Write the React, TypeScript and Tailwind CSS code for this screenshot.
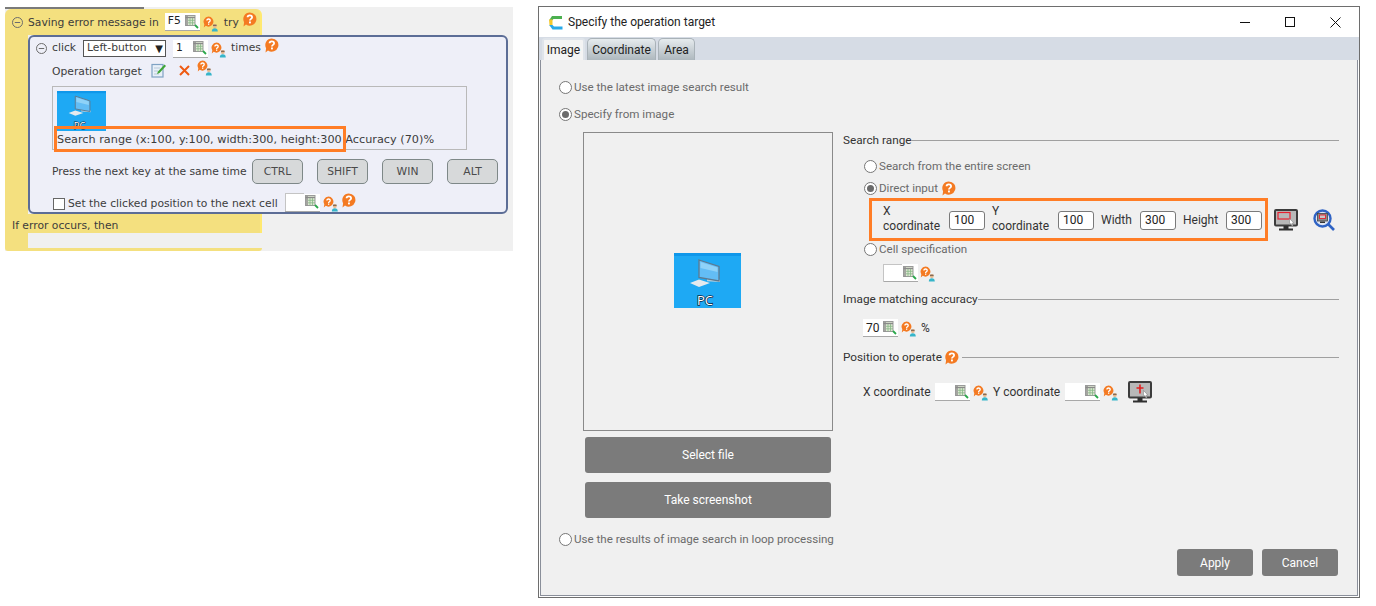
const HelpIcon = () => (
  <svg width="15" height="15" viewBox="0 0 15 15" className="shrink-0">
    <path d="M7.8.4a6.600 6.600 0 1 1-3.800 12L1.500 14.500l.6-4.300A6.600 6.600 0 0 1 7.800.4z" fill="#f47a22" />
    <path d="M5.600 5.300c0-2.600 4.500-2.600 4.500 0 0 1.600-2.200 1.600-2.200 3.300" fill="none" stroke="#fff" strokeWidth="1.800" />
    <rect x="7" y="9.500" width="1.900" height="1.900" fill="#fff" />
  </svg>
)

const HelpUserIcon = () => (
  <svg width="16" height="16" viewBox="0 0 16 16" className="shrink-0">
    <path d="M5.500 .6a5 5 0 1 1-2.800 9.200L.8 11.400l.5-3.200A5 5 0 0 1 5.500 .6z" fill="#f47a22" />
    <path d="M3.900 4.500c0-2 3.300-2 3.300 0 0 1.200-1.600 1.200-1.600 2.400" fill="none" stroke="#fff" strokeWidth="1.300" />
    <rect x="5" y="7.500" width="1.300" height="1.300" fill="#fff" />
    <circle cx="11.800" cy="10" r="2" fill="#e3b68c" />
    <path d="M10 8.800h3.600v.8H10z" fill="#4a3a30" />
    <path d="M8.800 15.500c0-2.500 1.200-3.300 3-3.300s3 .8 3 3.300z" fill="#37b5c9" />
  </svg>
)

const GridIcon = () => (
  <svg width="14" height="14" viewBox="0 0 14 14" className="shrink-0">
    <rect x="0.500" y="0.500" width="9.500" height="10" fill="#dfe8d4" stroke="#9a9a9a" />
    <path d="M0.500 2.500h9.500" stroke="#8a8a8a" strokeWidth="1.400" />
    <path d="M2 1v9.500" stroke="#8a8a8a" strokeWidth="1.400" />
    <path d="M5 3v7.500M7.500 3v7.500M3 5.300h7M3 7.800h7" stroke="#86b886" strokeWidth="0.800" />
    <path d="M10 10l3 3" stroke="#2aa84a" strokeWidth="1.800" />
  </svg>
)

const CellInput = ({ value = '', boxed = false }: { value?: string; boxed?: boolean }) => (
  <div className="flex h-[18px] w-[35px] shrink-0 items-center justify-between border-b border-[#a8a8a8] bg-white text-[#222]">
    {boxed ? (
      <div className="h-[18px] w-[19px] border-l border-t border-[#c4c4c4]" />
    ) : (
      <span className="pl-[3px] leading-none">{value}</span>
    )}
    <div className="pr-[1px]">
      <GridIcon />
    </div>
  </div>
)

const PcThumb = ({ className }: { className: string }) => (
  <svg viewBox="0 0 67 55" preserveAspectRatio="xMidYMin slice" className={className}>
    <rect width="67" height="55" fill="#1ea9f4" />
    <rect width="67" height="3" fill="#0f97ea" />
    <path d="M33 25.500l13 1.200v2.300l-13-.8z" fill="#b9d0de" />
    <path d="M25 7l20 6.500V28l-20-3.500z" fill="#63bdf5" stroke="#5d7a90" strokeWidth="1.300" />
    <path d="M26.500 9l17 5.500V19L26.500 15z" fill="#8fd2f8" />
    <path d="M16 30l9-3.500 11 3.500-11 4z" fill="#e4eaee" />
    <text x="31" y="52" textAnchor="middle" fontSize="13" fontFamily="Open Sans, sans-serif" fill="#fff" stroke="#0b2a44" strokeWidth="1.500" paintOrder="stroke">PC</text>
  </svg>
)

const MonitorIcon = ({ cross = false }: { cross?: boolean }) => (
  <svg width="24" height="23" viewBox="0 0 24 23" className="shrink-0">
    <rect x="1" y="1" width="22" height="15.500" rx="1" fill="#b8b8b8" stroke="#3c3c3c" strokeWidth="2" />
    <path d="M9.500 17h5v2.500h-5zM5 19.500h14v2H5z" fill="#2f2f2f" />
    {cross ? (
      <path d="M12 3.500v9M8.500 7h7" stroke="#e02020" strokeWidth="1.600" />
    ) : (
      <rect x="4" y="3.500" width="12" height="6.500" fill="#b8b8b8" stroke="#e8202f" strokeWidth="1.200" />
    )}
    <path d="M15.500 9.500v6l1.500-1 1 2.500 1-.5-1-2.300h2z" fill="#fff" stroke="#777" strokeWidth="0.500" />
  </svg>
)

const SearchMonitorIcon = () => (
  <svg width="23" height="22" viewBox="0 0 23 22" className="shrink-0">
    <circle cx="9.500" cy="9.500" r="8" fill="#dfe6f2" stroke="#2f63c4" strokeWidth="2.400" />
    <rect x="4.500" y="4.500" width="10" height="7.500" fill="#8c8c8c" stroke="#444" strokeWidth="0.800" />
    <rect x="6.500" y="6" width="6" height="3.500" fill="#c8c8c8" stroke="#e8202f" strokeWidth="0.900" />
    <path d="M7 12.500h5v1.500H7z" fill="#333" />
    <path d="M15 15l6 6" stroke="#2f63c4" strokeWidth="2.600" />
  </svg>
)

const Collapse = () => (
  <svg width="11" height="11" viewBox="0 0 11 11" className="shrink-0">
    <circle cx="5.500" cy="5.500" r="5" fill="none" stroke="#6c6c6c" />
    <path d="M2.800 5.500h5.400" stroke="#6c6c6c" />
  </svg>
)

const Radio = ({ checked = false, label }: { checked?: boolean; label: string }) => (
  <div className="flex h-4 items-center gap-[2px] text-[11.6px] text-[#6b6b6b]">
    <div className="flex h-[13px] w-[13px] shrink-0 items-center justify-center rounded-full border border-[#767676] bg-white">
      {checked && <div className="h-[7px] w-[7px] rounded-full bg-[#6a6a6a]" />}
    </div>
    <span className="mt-[1px] whitespace-nowrap">{label}</span>
  </div>
)

const SectionTitle = ({ title, help = false }: { title: string; help?: boolean }) => (
  <div className="flex h-4 items-center text-[11.75px] text-[#333]">
    <span className="mt-[1px] whitespace-nowrap">{title}</span>
    {help && (
      <div className="ml-[2px]">
        <HelpIcon />
      </div>
    )}
    <div className={`h-px flex-1 bg-[#a0a0a0] ${help ? 'ml-[3px]' : ''}`} />
  </div>
)

const NumBox = ({ value }: { value: string }) => (
  <div className="flex h-[19px] w-[36px] shrink-0 items-center rounded-[3px] border border-[#7a7a7a] bg-white pl-[4px] text-[#222]">
    {value}
  </div>
)

const KeyButton = ({ label }: { label: string }) => (
  <div className="flex h-[25px] w-[51px] items-center justify-center rounded-[5px] border border-[#7e8888] bg-[#d7d9da] pt-[1px] text-[#4a4a4a]">
    {label}
  </div>
)

const GrayButton = ({ label, className }: { label: string; className: string }) => (
  <div className={`flex items-center justify-center rounded-[3px] bg-[#7b7b7b] text-white ${className}`}>
    {label}
  </div>
)

const ScriptPanel = () => (
  <div className="flex h-[244px] w-[508px] shrink-0 flex-col bg-[#f0f0f0] text-[10.75px] text-[#3c3c3c] [font-family:'DejaVu_Sans',sans-serif]">
    <div className="h-[2px] w-[139px] bg-[#7a7a7a]" />
    <div className="flex h-[26px] w-[257px] items-center rounded-t-[6px] border-r-2 border-[#ffe970] bg-[#f4e07f] pl-[7px]">
      <Collapse />
      <span className="ml-[5px] mt-[2px] whitespace-nowrap">Saving error message in</span>
      <div className="ml-[6px]">
        <CellInput value="F5" />
      </div>
      <div className="ml-[3px] mt-[3px]">
        <HelpUserIcon />
      </div>
      <span className="ml-[5px] mt-[2px]">try</span>
      <div className="mb-[5px] ml-[3px]">
        <HelpIcon />
      </div>
    </div>

    <div className="flex h-[179px]">
      <div className="w-[23px] bg-[#f4e07f]" />
      <div className="flex w-[480px] flex-col rounded-[6px] border-2 border-[#5c6d96] bg-[#eeeff8] pl-[6px] pr-[8px]">
        <div className="flex h-[21px] items-center pt-[2px]">
          <Collapse />
          <span className="ml-[5px]">click</span>
          <div className="ml-[7px] flex h-[17px] w-[83px] items-center justify-between border border-[#555] bg-white pl-[3px] pr-[2px]">
            <span className="whitespace-nowrap">Left-button</span>
            <span className="text-[10px] leading-none text-[#222]">▼</span>
          </div>
          <div className="ml-[7px]">
            <CellInput value="1" />
          </div>
          <div className="ml-[3px] mt-[3px]">
            <HelpUserIcon />
          </div>
          <span className="ml-[4px]">times</span>
          <div className="mb-[6px] ml-[3px]">
            <HelpIcon />
          </div>
        </div>

        <div className="mt-[3px] flex h-[19px] items-center pl-[16px]">
          <span className="mt-[3px] whitespace-nowrap">Operation target</span>
          <svg width="15" height="15" viewBox="0 0 15 15" className="ml-[9px]">
            <rect x="1" y="1.500" width="11" height="12.500" fill="#e8f0f8" stroke="#7fa2c4" strokeWidth="1.200" />
            <path d="M3 5h6M3 8h4M3 11h5" stroke="#b8c8d8" />
            <path d="M13.500 1.500L7 8.500l-1 2.500 2.500-1 6.500-7z" fill="#3fa535" />
          </svg>
          <svg width="11" height="11" viewBox="0 0 11 11" className="ml-[13px]">
            <path d="M1 1l9 9M10 1l-9 9" stroke="#ee5a12" strokeWidth="2" />
          </svg>
          <div className="mb-[5px] ml-[7px]">
            <HelpUserIcon />
          </div>
        </div>

        <div className="relative ml-[16px] mt-[6px] h-[64px] w-[415px] border border-[#b9b9b9]">
          <div className="ml-[4px] mt-[4px] h-[40px] w-[49px] overflow-hidden">
            <PcThumb className="block h-[40px] w-[49px]" />
          </div>
          <div className="ml-[4px] mt-[1px] whitespace-nowrap text-[11.25px]">
            Search range (x:100, y:100, width:300, height:300 Accuracy (70)%
          </div>
          <div className="absolute left-[1px] top-[39px] h-[26px] w-[292px] border-[3px] border-[#ff7d26]" />
        </div>

        <div className="mt-[9px] flex h-[25px] items-center pl-[16px]">
          <span className="mt-[2px] w-[200px] whitespace-nowrap">Press the next key at the same time</span>
          <div className="flex gap-[14px]">
            <KeyButton label="CTRL" />
            <KeyButton label="SHIFT" />
            <KeyButton label="WIN" />
            <KeyButton label="ALT" />
          </div>
        </div>

        <div className="mt-[9px] flex h-[20px] items-center pl-[17px]">
          <div className="mt-[2px] h-[12px] w-[12px] border border-[#666] bg-white" />
          <span className="ml-[3px] mt-[2px] w-[217px] whitespace-nowrap">Set the clicked position to the next cell</span>
          <CellInput boxed />
          <div className="ml-[3px] mt-[2px]">
            <HelpUserIcon />
          </div>
          <div className="mb-[5px] ml-[2px]">
            <HelpIcon />
          </div>
        </div>
      </div>
    </div>

    <div className="flex h-[19px] w-[257px] items-center border-r-2 border-[#ffe970] bg-[#f4e07f] pl-[7px] pt-[5px]">
      If error occurs, then
    </div>
    <div className="h-[18px] w-[257px] rounded-b-[3px] bg-[#f4e07f] pb-[3px] pl-[23px]">
      <div className="h-[15px] bg-[#f0f0f0]" />
    </div>
  </div>
)

const Dialog = () => (
  <div className="ml-[25px] mt-[-1px] flex h-[592px] w-[822px] shrink-0 flex-col border border-[#6e6e6e] bg-white text-[12px] [font-family:'Roboto',sans-serif]">
    <div className="flex h-[30px] items-center pl-[9px] pr-[18px] text-[#222]">
      <svg width="15" height="15" viewBox="0 0 15 15" className="shrink-0">
        <path d="M4 1h10v3H5.500L4 5.500H1z" fill="#4cb050" />
        <path d="M1 4.500h3.500v6H1.500z" fill="#f5c92e" />
        <path d="M1.200 10h3.300l1.500 1.500h8.500v3H4.500z" fill="#29a9e8" />
      </svg>
      <span className="ml-[5px]">Specify the operation target</span>
      <div className="ml-auto flex items-center gap-[35px]">
        <div className="h-px w-[10px] bg-[#111]" />
        <div className="h-[10px] w-[10px] border border-[#111]" />
        <svg width="11" height="11" viewBox="0 0 11 11">
          <path d="M.5.5l10 10M10.500.5l-10 10" stroke="#111" />
        </svg>
      </div>
    </div>

    <div className="flex h-[23px] items-end gap-[2px] bg-[#d6dce5] pl-[3px] pr-[1px] text-[#222]">
      <div className="flex h-[22px] w-[43px] items-center justify-center rounded-t-[3px] border-x-2 border-t-2 border-[#dfe4ea] bg-[#f4f4f4]">Image</div>
      <div className="flex h-[22px] w-[69px] items-center justify-center rounded-t-[5px] border border-b-0 border-[#a9b2b8] bg-gradient-to-b from-[#e6ebee] to-[#aeb8be]">Coordinate</div>
      <div className="flex h-[22px] w-[37px] items-center justify-center rounded-t-[5px] border border-b-0 border-[#a9b2b8] bg-gradient-to-b from-[#e6ebee] to-[#aeb8be]">Area</div>
    </div>

    <div className="mx-[1px] mb-[1px] flex flex-1 flex-col border-x border-b border-[#8a8f9a] bg-[#f0f0f0] pl-[18px] pr-[18px]">
      <div className="mt-[19px]">
        <Radio label="Use the latest image search result" />
      </div>
      <div className="mt-[11px]">
        <Radio checked label="Specify from image" />
      </div>

      <div className="mt-[10px] flex">
        <div className="w-[284px] shrink-0 pl-[24px]">
          <div className="flex h-[299px] w-[250px] items-center justify-center border border-[#8a8a8a] bg-[#f0f0f0]">
            <PcThumb className="mb-[2px] mr-[1px] h-[55px] w-[67px]" />
          </div>
          <GrayButton label="Select file" className="ml-[2px] mt-[6px] h-[36px] w-[246px]" />
          <GrayButton label="Take screenshot" className="ml-[2px] mt-[9px] h-[36px] w-[246px]" />
        </div>

        <div className="flex-1">
          <SectionTitle title="Search range" />
          <div className="ml-[21px] mt-[10px]">
            <Radio label="Search from the entire screen" />
          </div>
          <div className="ml-[21px] mt-[6px] flex items-center">
            <Radio checked label="Direct input" />
            <div className="ml-[3px]">
              <HelpIcon />
            </div>
          </div>
          <div className="ml-[26px] mt-[2px] flex items-center">
            <div className="flex h-[43px] w-[399px] shrink-0 items-center border-[3px] border-[#ff7d26] pl-[11px] text-[#333]">
              <div className="mb-[1px] w-[66px] leading-[15px]">X<br />coordinate</div>
              <div className="mt-[1px]"><NumBox value="100" /></div>
              <div className="mb-[1px] ml-[7px] w-[66px] leading-[15px]">Y<br />coordinate</div>
              <div className="mt-[1px]"><NumBox value="100" /></div>
              <span className="ml-[7px] w-[39px]">Width</span>
              <div className="mt-[1px]"><NumBox value="300" /></div>
              <span className="ml-[7px] w-[43px]">Height</span>
              <div className="mt-[1px]"><NumBox value="300" /></div>
            </div>
            <div className="ml-[6px] mt-[2px]"><MonitorIcon /></div>
            <div className="ml-[15px]"><SearchMonitorIcon /></div>
          </div>
          <div className="ml-[21px]">
            <Radio label="Cell specification" />
          </div>
          <div className="ml-[40px] mt-[7px] flex items-center">
            <CellInput boxed />
            <div className="ml-[2px] mt-[2px]"><HelpUserIcon /></div>
          </div>
          <div className="mt-[9px]">
            <SectionTitle title="Image matching accuracy" />
          </div>
          <div className="ml-[20px] mt-[12px] flex items-center text-[#333]">
            <CellInput value="70" />
            <div className="ml-[3px] mt-[2px]"><HelpUserIcon /></div>
            <span className="ml-[4px]">%</span>
          </div>
          <div className="mt-[12px]">
            <SectionTitle title="Position to operate" help />
          </div>
          <div className="ml-[20px] mt-[17px] flex h-[20px] items-center text-[#333]">
            <span className="w-[72px] whitespace-nowrap">X coordinate</span>
            <CellInput />
            <div className="ml-[3px] mt-[2px]"><HelpUserIcon /></div>
            <span className="ml-[4px] w-[72px] whitespace-nowrap">Y coordinate</span>
            <CellInput />
            <div className="ml-[3px] mt-[2px]"><HelpUserIcon /></div>
            <div className="ml-[9px]"><MonitorIcon cross /></div>
          </div>
        </div>
      </div>

      <div className="mt-[13px]">
        <Radio label="Use the results of image search in loop processing" />
      </div>
      <div className="mr-[1px] mt-[2px] flex justify-end gap-[9px]">
        <GrayButton label="Apply" className="h-[27px] w-[76px]" />
        <GrayButton label="Cancel" className="h-[27px] w-[76px]" />
      </div>
    </div>
  </div>
)

export default function App() {
  return (
    <div className="flex h-[606px] w-[1376px] items-start overflow-hidden bg-white pl-[5px] pt-[7px]">
      <ScriptPanel />
      <Dialog />
    </div>
  )
}
